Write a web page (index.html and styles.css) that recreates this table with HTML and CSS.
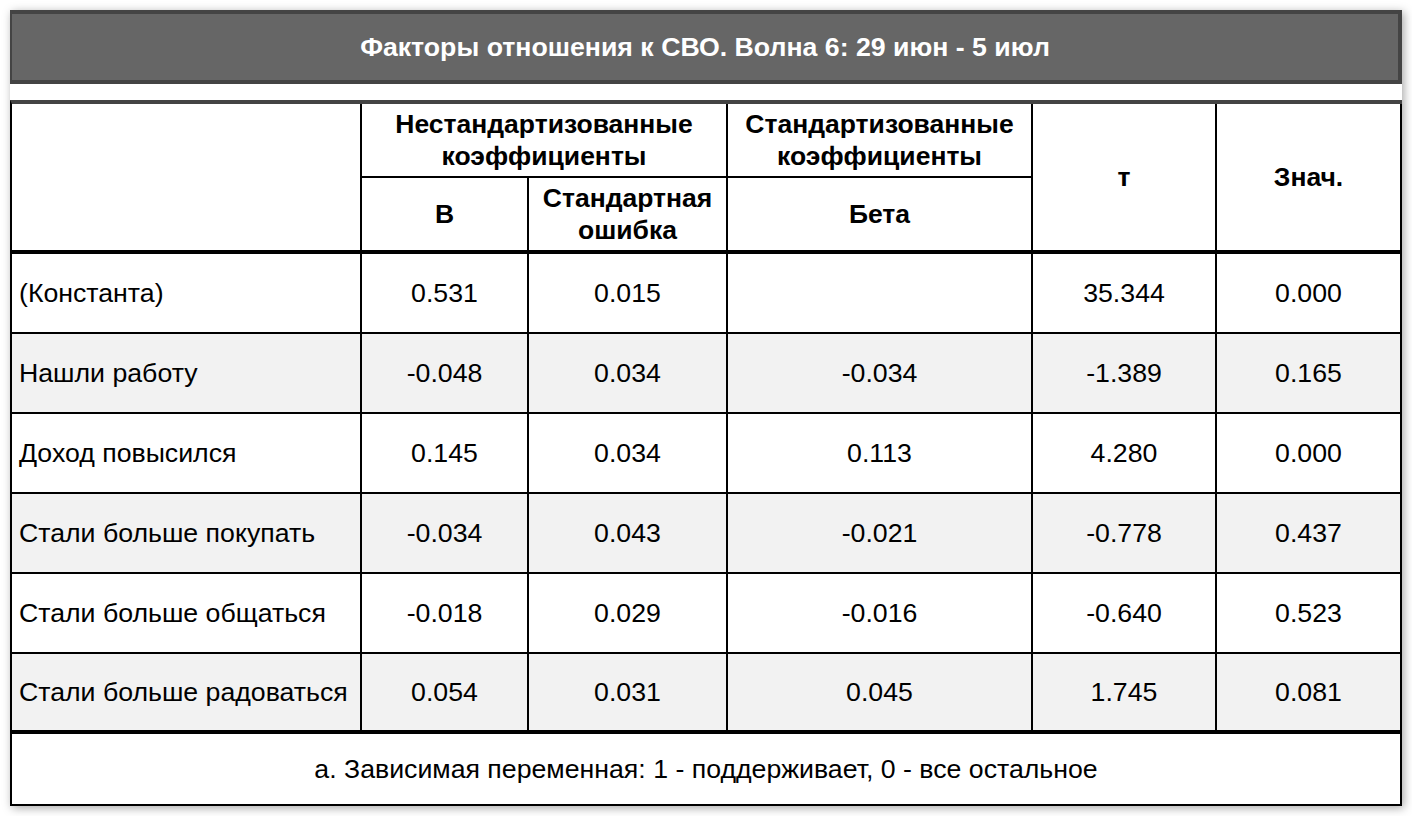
FILE: index.html
```html
<!DOCTYPE html>
<html lang="ru">
<head>
<meta charset="utf-8">
<title>Факторы отношения к СВО</title>
<link rel="stylesheet" href="styles.css">
</head>
<body>
<div class="card">
  <div class="title">Факторы отношения к СВО. Волна 6: 29 июн - 5 июл</div>
  <table class="reg">
    <colgroup>
      <col class="c1"><col class="c2"><col class="c3"><col class="c4"><col class="c5"><col class="c6">
    </colgroup>
    <thead>
      <tr class="h1">
        <th rowspan="2" class="thick"></th>
        <th colspan="2">Нестандартизованные<br>коэффициенты</th>
        <th>Стандартизованные<br>коэффициенты</th>
        <th rowspan="2" class="thick">т</th>
        <th rowspan="2" class="thick">Знач.</th>
      </tr>
      <tr class="h2">
        <th class="thick">B</th>
        <th class="thick">Стандартная<br>ошибка</th>
        <th class="thick">Бета</th>
      </tr>
    </thead>
    <tbody>
      <tr><td class="name">(Константа)</td><td>0.531</td><td>0.015</td><td></td><td>35.344</td><td>0.000</td></tr>
      <tr class="alt"><td class="name">Нашли работу</td><td>-0.048</td><td>0.034</td><td>-0.034</td><td>-1.389</td><td>0.165</td></tr>
      <tr><td class="name">Доход повысился</td><td>0.145</td><td>0.034</td><td>0.113</td><td>4.280</td><td>0.000</td></tr>
      <tr class="alt"><td class="name">Стали больше покупать</td><td>-0.034</td><td>0.043</td><td>-0.021</td><td>-0.778</td><td>0.437</td></tr>
      <tr><td class="name">Стали больше общаться</td><td>-0.018</td><td>0.029</td><td>-0.016</td><td>-0.640</td><td>0.523</td></tr>
      <tr class="alt last"><td class="name">Стали больше радоваться</td><td>0.054</td><td>0.031</td><td>0.045</td><td>1.745</td><td>0.081</td></tr>
    </tbody>
    <tfoot>
      <tr><td colspan="6" class="note">а. Зависимая переменная: 1 - поддерживает, 0 - все остальное</td></tr>
    </tfoot>
  </table>
</div>
</body>
</html>
```

FILE: styles.css
```css
html, body {
  margin: 0;
  padding: 0;
  background: #ffffff;
}
body {
  padding: 10px;
  font-family: "Liberation Sans", Arial, Helvetica, sans-serif;
  color: #000;
}
.card {
  width: 1392px;
  box-sizing: border-box;
  background: #fff;
  box-shadow: 2px 2px 9px rgba(0, 0, 0, 0.35);
}
.title {
  box-sizing: border-box;
  height: 74px;
  background: #666666;
  border: 4px solid #444444;
  border-left-width: 2px;
  color: #fff;
  font-weight: bold;
  font-size: 26.7px;
  display: flex;
  align-items: center;
  justify-content: center;
  margin-bottom: 16px;
}
.reg {
  width: 1392px;
  table-layout: fixed;
  border-collapse: separate;
  border-spacing: 0;
  border-top: 4px solid #444444;
  border-left: 2px solid #000;
  font-size: 26.7px;
  line-height: 32px;
}
.c1 { width: 350px; }
.c2 { width: 167px; }
.c3 { width: 199px; }
.c4 { width: 305px; }
.c5 { width: 184px; }
.c6 { width: 185px; }
.reg th, .reg td {
  box-sizing: border-box;
  padding: 0;
  border-right: 2px solid #000;
  border-bottom: 2px solid #000;
  text-align: center;
  vertical-align: middle;
}
.reg th {
  font-weight: bold;
  font-size: 26.5px;
}
.reg .h1 th { height: 74px; }
.reg .h2 th { height: 76px; }
.reg th.thick { border-bottom-width: 4px; }
.reg tbody td { height: 80px; }
.reg tbody tr.last td { border-bottom-width: 4px; }
.reg tbody tr.alt td { background: #f2f2f2; }
.reg td.name {
  text-align: left;
  padding-left: 7px;
}
.reg td.note {
  height: 72px;
}
```
